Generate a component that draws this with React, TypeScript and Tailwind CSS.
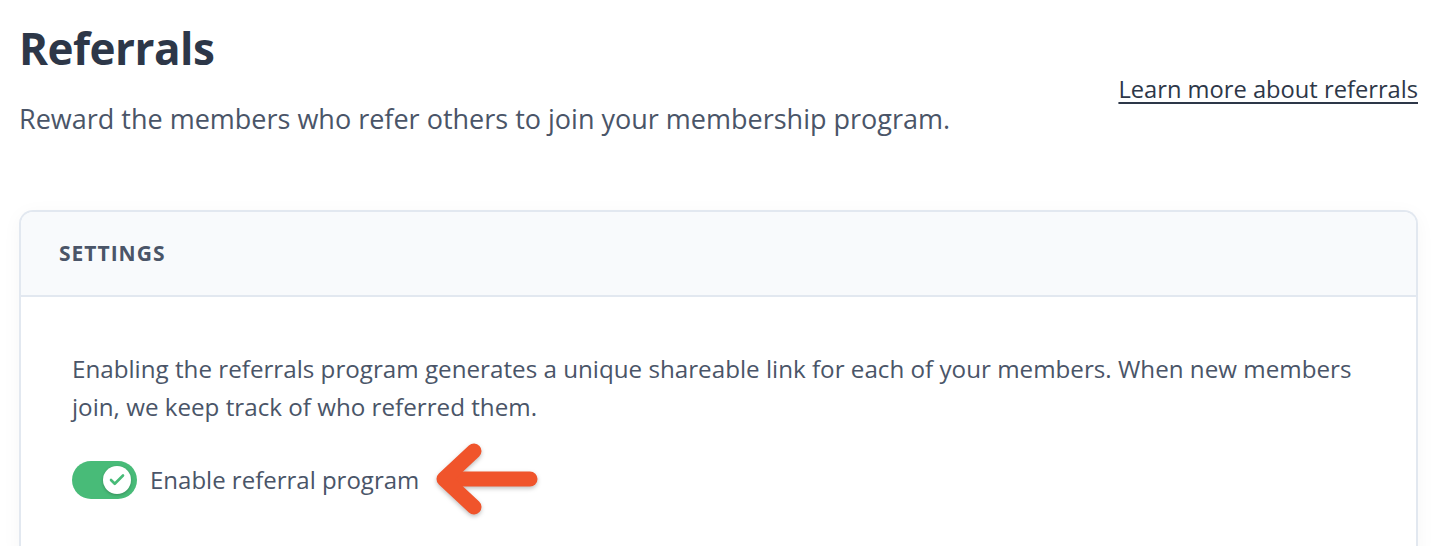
import { Check } from 'lucide-react';

const font = { fontFamily: '"Open Sans", "Liberation Sans", sans-serif' };

function Toggle() {
  return (
    <div className="flex h-[38px] w-[65px] shrink-0 items-center justify-end rounded-full bg-[#48bb78] pr-[6px]">
      <div className="flex h-[28px] w-[28px] items-center justify-center rounded-full bg-white shadow-[0_1px_3px_rgba(0,0,0,0.25)]">
        <Check size={18} strokeWidth={3.5} className="text-[#48bb78]" />
      </div>
    </div>
  );
}

function Arrow() {
  return (
    <svg width="110" height="76" viewBox="0 0 110 76" className="ml-[13px] drop-shadow-[0_2px_2px_rgba(0,0,0,0.25)]">
      <g fill="none" stroke="#f0542b" strokeWidth="15" strokeLinecap="round" strokeLinejoin="round">
        <path d="M98 37 H14" />
        <path d="M42 9 L12 37 L42 65" />
      </g>
    </svg>
  );
}

export default function App() {
  return (
    <div className="min-h-screen bg-white pl-[19px] pr-[22px] pt-[20px] text-[#4a5568]" style={font}>
      {/* Page header */}
      <div className="flex items-start justify-between">
        <div>
          <h1 className="text-[44px] font-bold leading-[56px] tracking-[-0.5px] text-[#2d3748]">Referrals</h1>
          <p className="mt-[27px] text-[27px] leading-[32px]">
            Reward the members who refer others to join your membership program.
          </p>
        </div>
        <a href="#" className="mt-[53px] text-[23.7px] leading-[32px] text-[#2d3748] underline underline-offset-4">
          Learn more about referrals
        </a>
      </div>

      {/* Settings card */}
      <div className="mt-[75px] overflow-hidden rounded-t-[14px] border-2 border-b-0 border-[#e2e8f0] bg-white shadow-[0_4px_20px_rgba(0,0,0,0.04)]">
        <div className="flex h-[85px] items-center border-b-2 border-[#e2e8f0] bg-[#f8fafc] px-[38px]">
          <h2 className="text-[21px] font-bold tracking-[1px] text-[#4a5568]">SETTINGS</h2>
        </div>
        <div className="pl-[51px] pr-[54px] pt-[53px] pb-[40px]">
          <p className="text-[24.2px] leading-[38px]">
            Enabling the referrals program generates a unique shareable link for each of your members. When new members join, we keep track of who referred them.
          </p>
          <div className="mt-[16px] flex items-center">
            <Toggle />
            <span className="ml-[13px] text-[24px] leading-[32px]">Enable referral program</span>
            <Arrow />
          </div>
        </div>
      </div>
    </div>
  );
}
